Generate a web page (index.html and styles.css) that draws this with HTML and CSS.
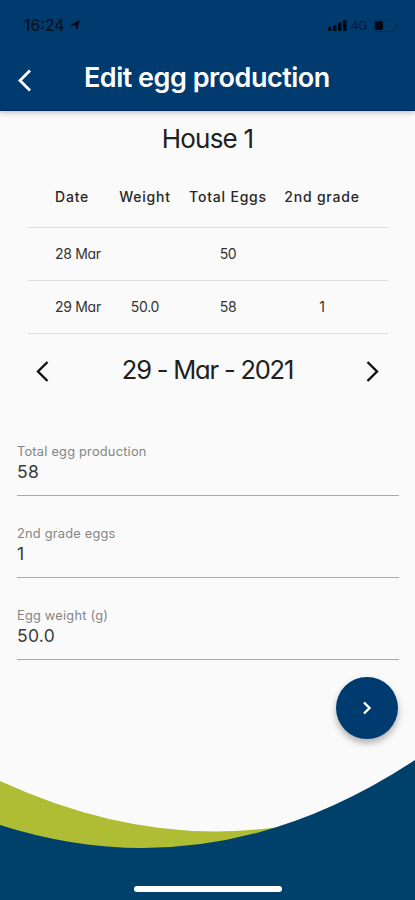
FILE: index.html
```html
<!DOCTYPE html>
<html lang="en">
<head>
<meta charset="utf-8">
<title>Edit egg production</title>
<link rel="stylesheet" href="styles.css">
</head>
<body>
<div class="screen">
  <header class="header">
    <div class="status">
      <span class="time">16:24</span>
      <svg class="arrow" width="10" height="11" viewBox="0 0 10 11"><path d="M0 5.2 10 0 6.7 10.5 5.5 5.6Z"/></svg>
      <svg class="signal" width="19" height="11" viewBox="0 0 19 11"><rect y="7" width="3.5" height="4" rx="1"/><rect x="5" y="5" width="3.5" height="6" rx="1"/><rect x="10" y="2.5" width="3.5" height="8.500" rx="1"/><rect x="15" width="3.5" height="11" rx="1"/></svg>
      <span class="network">4G</span>
      <svg class="battery" width="26" height="13" viewBox="0 0 26 13"><rect class="shell" x=".5" y=".5" width="22" height="12" rx="3.500"/><rect x="2" y="2" width="8" height="9" rx="1.500"/><path class="tip" d="M24 4.500v4q1.500-.5 1.500-2t-1.500-2"/></svg>
    </div>
    <div class="bar">
      <svg class="back" width="14" height="23" viewBox="0 0 14 23"><path d="M12 1.500 2 11.500l10 10"/></svg>
      <h1 class="title">Edit egg production</h1>
    </div>
  </header>
  <main class="main">
    <h2 class="house">House 1</h2>
    <div class="table">
      <div class="row head"><span class="date">Date</span><span>Weight</span><span>Total Eggs</span><span>2nd grade</span></div>
      <div class="row"><span class="date">28 Mar</span><span></span><span>50</span><span></span></div>
      <div class="row"><span class="date">29 Mar</span><span>50.0</span><span>58</span><span>1</span></div>
    </div>
    <div class="picker">
      <svg width="13" height="21" viewBox="0 0 13 21"><path d="M11.500 1 2 10.500l9.500 9.500"/></svg>
      <span class="day">29 - Mar - 2021</span>
      <svg width="13" height="21" viewBox="0 0 13 21"><path d="m1.500 1 9.500 9.500L1.500 20"/></svg>
    </div>
    <div class="fields">
      <div class="field"><span class="label">Total egg production</span><span class="value">58</span></div>
      <div class="field"><span class="label">2nd grade eggs</span><span class="value">1</span></div>
      <div class="field"><span class="label">Egg weight (g)</span><span class="value">50.0</span></div>
    </div>
    <div class="next">
      <svg width="10" height="14" viewBox="0 0 10 14"><path d="m2 1.500 5.500 5.500L2 12.500"/></svg>
    </div>
  </main>
  <svg class="wave" width="415" height="150" viewBox="0 750 415 150">
    <path class="green" d="M0 781Q110 831.500 215 831.500Q245 831.500 280 827L280 860H0Z"/>
    <path class="blue" d="M0 825Q213 893 415 760V900H0Z"/>
  </svg>
  <div class="home"></div>
</div>
</body>
</html>
```

FILE: styles.css
```css
* { box-sizing: border-box; }
body { margin: 0; background: #fafafa; color: #202020; font-family: Inter, "Liberation Sans", sans-serif; }
.screen { position: relative; width: 415px; height: 900px; overflow: hidden; background: #fafafa; }
.header { height: 111px; background: #003b70; border-bottom: 1px solid #002a62; box-shadow: 0 2px 5px rgba(0,0,0,.22); }
.status { display: flex; align-items: center; height: 51px; padding-left: 24px; color: #07121e; fill: #020810; }
.time { width: 43px; font-size: 15.500px; font-weight: 500; line-height: 20px; }
.arrow { margin-left: 3px; }
.signal { margin-left: 248px; }
.network { width: 18px; margin-left: 4px; font-size: 12px; letter-spacing: -.2px; opacity: .8; }
.battery { margin-left: 4px; }
.shell { fill: none; stroke: #092d50; }
.tip { fill: #092d50; }
.bar { display: flex; align-items: center; height: 58px; padding-left: 18px; }
.back { fill: none; stroke: #fff; stroke-width: 2.800; }
.title { width: 249px; margin: 0 0 4px 52px; color: #fff; font-size: 27px; font-weight: 600; letter-spacing: -.5px; line-height: 34px; white-space: nowrap; }
.house { height: 58px; margin: 0; padding-top: 11px; font-size: 26px; font-weight: 400; line-height: 34px; letter-spacing: -.8px; text-align: center; }
.title, .house, .day, .row:not(.head) { font-feature-settings: "cv11" 1; }
.table { width: 360px; margin-left: 28px; }
.row { display: grid; grid-template-columns: 76px 82px 84px 104px; height: 53px; align-items: center; border-bottom: 1px solid #dedede; font-size: 14px; line-height: 18px; letter-spacing: -.3px; text-align: center; color: #333; white-space: nowrap; }
.row.head { height: 59px; padding-bottom: 3px; font-weight: 500; letter-spacing: .8px; color: #282828; }
.row .date { text-align: left; padding-left: 27px; }
.row:not(.head) { padding-bottom: 1px; }
.picker { display: flex; align-items: center; justify-content: space-between; height: 75px; padding: 0 36px; }
.picker svg { fill: none; stroke: #111; stroke-width: 2.400; }
.day { font-size: 25.500px; line-height: 34px; letter-spacing: -1.200px; white-space: nowrap; margin-bottom: 4px; }
.fields { padding: 31px 16px 0 17px; }
.field { display: flex; flex-direction: column; height: 82px; padding-top: 3px; }
.field::after { content: ""; height: 1px; margin-top: 11px; background: #aaa; }
.label { height: 17px; color: #858585; font-size: 12.800px; line-height: 17px; letter-spacing: .22px; }
.value { height: 24px; color: #3c3c3c; font-size: 17.500px; line-height: 24px; letter-spacing: .3px; }
.next { display: flex; align-items: center; justify-content: center; width: 62px; height: 62px; margin: -9px 0 0 336px; border-radius: 50%; background: #003b70; box-shadow: 0 4px 7px rgba(0,0,0,.3); }
.next svg { fill: none; stroke: #fff; stroke-width: 2.400; }
.wave { position: absolute; left: 0; bottom: 0; }
.green { fill: #afbd35; }
.blue { fill: #00416b; }
.home { position: absolute; bottom: 8px; left: 134px; width: 148px; height: 6px; border-radius: 3px; background: #fff; }
```
